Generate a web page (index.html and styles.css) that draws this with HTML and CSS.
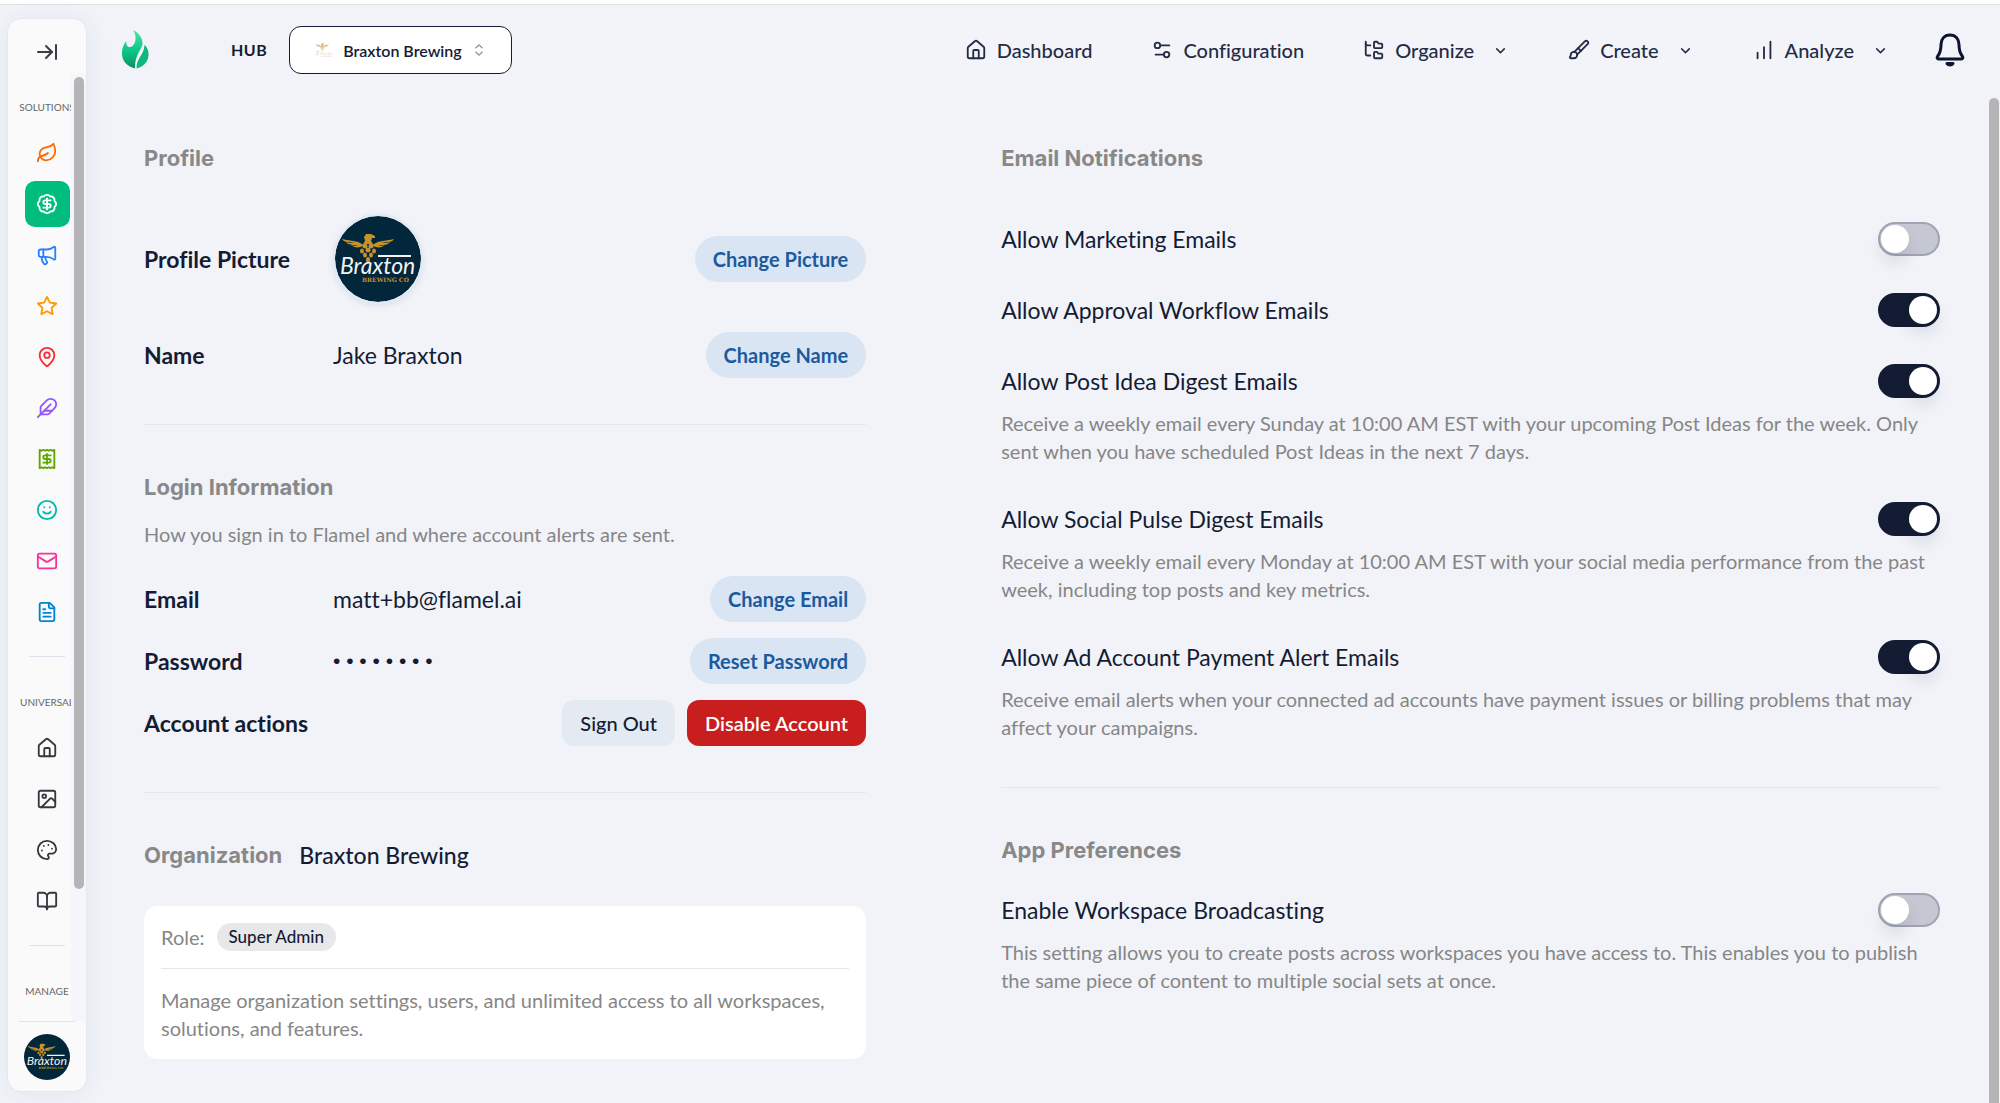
FILE: index.html
```html
<!DOCTYPE html>
<html lang="en">
<head>
  <meta charset="UTF-8">
  <meta name="viewport" content="width=device-width, initial-scale=1.0">
  <title>Flamel - Account Settings</title>
  <link rel="stylesheet" href="styles.css">
</head>
<body>
  <svg class="defs" aria-hidden="true">
    <symbol id="eagle" viewBox="0 0 54 30">
      <g fill="#c8922b">
        <path d="M24 8l-1-4 2-3h5l4 2v2h-3l-1 3 2 3h-10z"/>
        <path d="M22 12C19 8 10 8 1 6c1 2 3 3 6 3l7 1c-4 0-7 0-9-1 2 3 6 3 9 3h3c-3 1-5 1-7 0 3 3 8 3 12 1z"/>
        <path d="M32 12c3-4 12-4 21-6-1 2-3 3-6 3l-7 1c4 0 7 0 9-1-2 3-6 3-9 3h-3c3 1 5 1 7 0-3 3-8 3-12 1z"/>
        <ellipse cx="24" cy="13" rx="2.500" ry="2.500"/>
        <ellipse cx="30" cy="13" rx="2.500" ry="2.500"/>
        <ellipse cx="21" cy="18" rx="2" ry="2.500"/>
        <ellipse cx="27" cy="17" rx="2.500" ry="2.500"/>
        <ellipse cx="33" cy="18" rx="2" ry="2.500"/>
        <ellipse cx="24" cy="22" rx="2" ry="2.500"/>
        <ellipse cx="30" cy="22" rx="2" ry="2.500"/>
        <ellipse cx="27" cy="27" rx="2" ry="3"/>
      </g>
    </symbol>
    <symbol id="brand" viewBox="0 0 86 86">
      <circle cx="43" cy="43" r="43" fill="#02263a"/>
      <use href="#eagle" x="6" y="17" width="54" height="30"/>
      <path d="M43 40h33" stroke="#f2f2f2" stroke-width="2"/>
      <text class="brand-script" x="5" y="58">Braxton</text>
      <text class="brand-sub" x="27" y="66">BREWING CO</text>
    </symbol>
    <symbol id="house" viewBox="0 0 24 24">
      <path d="M15 21v-8a1 1 0 0 0-1-1h-4a1 1 0 0 0-1 1v8"/>
      <path d="M3 10a2 2 0 0 1 .709-1.528l7-6a2 2 0 0 1 2.582 0l7 6A2 2 0 0 1 21 10v9a2 2 0 0 1-2 2H5a2 2 0 0 1-2-2z"/>
    </symbol>
    <symbol id="chevron" viewBox="0 0 24 24"><path d="m6 9 6 6 6-6"/></symbol>
  </svg>

  <div class="app">
    <aside class="sidebar">
      <button class="side-toggle" aria-label="Expand sidebar">
        <svg class="icon" viewBox="0 0 24 24"><path d="M17 12H3"/><path d="m11 18 6-6-6-6"/><path d="M21 5v14"/></svg>
      </button>
      <div class="side-scroll">
        <nav class="side-nav">
          <div class="side-label">SOLUTIONS</div>
          <a href="#" class="side-item orange" aria-label="Organic"><svg class="icon" viewBox="0 0 24 24"><path d="M11 20A7 7 0 0 1 9.800 6.100C15.500 5 17 4.480 19 2c1 2 2 4.180 2 8 0 5.500-4.780 10-10 10Z"/><path d="M2 21c0-3 1.850-5.360 5.080-6C9.500 14.520 12 13 13 12"/></svg></a>
          <a href="#" class="side-item active" aria-label="Hub"><svg class="icon" viewBox="0 0 24 24"><path d="M3.850 8.620a4 4 0 0 1 4.780-4.770 4 4 0 0 1 6.740 0 4 4 0 0 1 4.780 4.780 4 4 0 0 1 0 6.740 4 4 0 0 1-4.770 4.780 4 4 0 0 1-6.750 0 4 4 0 0 1-4.780-4.770 4 4 0 0 1 0-6.760Z"/><path d="M16 8h-6a2 2 0 1 0 0 4h4a2 2 0 1 1 0 4H8"/><path d="M12 18V6"/></svg></a>
          <a href="#" class="side-item blue" aria-label="Ads"><svg class="icon" viewBox="0 0 24 24"><path d="M11 6a13 13 0 0 0 8.400-2.800A1 1 0 0 1 21 4v12a1 1 0 0 1-1.600.8A13 13 0 0 0 11 14H5a2 2 0 0 1-2-2V8a2 2 0 0 1 2-2z"/><path d="M6 14a12 12 0 0 0 2.400 7.200 2 2 0 0 0 3.200-2.400A8 8 0 0 1 10 14"/><path d="M8 6v8"/></svg></a>
          <a href="#" class="side-item amber" aria-label="Reviews"><svg class="icon" viewBox="0 0 24 24"><path d="M12 2l3.090 6.260L22 9.270l-5 4.870 1.180 6.880L12 17.770l-6.180 3.250L7 14.140 2 9.270l6.910-1.010z"/></svg></a>
          <a href="#" class="side-item red" aria-label="Locations"><svg class="icon" viewBox="0 0 24 24"><path d="M20 10c0 4.993-5.539 10.193-7.399 11.799a1 1 0 0 1-1.202 0C9.539 20.193 4 14.993 4 10a8 8 0 0 1 16 0"/><circle cx="12" cy="10" r="3"/></svg></a>
          <a href="#" class="side-item purple" aria-label="Writing"><svg class="icon" viewBox="0 0 24 24"><path d="M12.670 19a2 2 0 0 0 1.416-.588l6.154-6.172a6 6 0 0 0-8.490-8.490L5.586 9.914A2 2 0 0 0 5 11.328V18a1 1 0 0 0 1 1z"/><path d="M16 8 2 22"/><path d="M17.500 15H9"/></svg></a>
          <a href="#" class="side-item green" aria-label="Billing"><svg class="icon" viewBox="0 0 24 24"><path d="M4 2v20l2-1 2 1 2-1 2 1 2-1 2 1 2-1 2 1V2l-2 1-2-1-2 1-2-1-2 1-2-1-2 1Z"/><path d="M16 8h-6a2 2 0 1 0 0 4h4a2 2 0 1 1 0 4H8"/><path d="M12 17.500v-11"/></svg></a>
          <a href="#" class="side-item teal" aria-label="Engagement"><svg class="icon" viewBox="0 0 24 24"><circle cx="12" cy="12" r="10"/><path d="M8 14s1.500 2 4 2 4-2 4-2"/><path d="M9 9h.01"/><path d="M15 9h.01"/></svg></a>
          <a href="#" class="side-item pink" aria-label="Email"><svg class="icon" viewBox="0 0 24 24"><rect x="2" y="4" width="20" height="16" rx="2"/><path d="m22 7-8.970 5.700a1.940 1.940 0 0 1-2.060 0L2 7"/></svg></a>
          <a href="#" class="side-item sky" aria-label="Pages"><svg class="icon" viewBox="0 0 24 24"><path d="M15 2H6a2 2 0 0 0-2 2v16a2 2 0 0 0 2 2h12a2 2 0 0 0 2-2V7Z"/><path d="M14 2v4a2 2 0 0 0 2 2h4"/><path d="M10 9H8"/><path d="M16 13H8"/><path d="M16 17H8"/></svg></a>
          <hr class="side-divider">
          <div class="side-label">UNIVERSAL</div>
          <a href="#" class="side-item" aria-label="Home"><svg class="icon"><use href="#house"/></svg></a>
          <a href="#" class="side-item" aria-label="Media"><svg class="icon" viewBox="0 0 24 24"><rect x="3" y="3" width="18" height="18" rx="2"/><circle cx="9" cy="9" r="2"/><path d="m21 15-3.086-3.086a2 2 0 0 0-2.828 0L6 21"/></svg></a>
          <a href="#" class="side-item" aria-label="Branding"><svg class="icon" viewBox="0 0 24 24"><path d="M12 22a1 1 0 0 1 0-20 10 9 0 0 1 10 9 5 5 0 0 1-5 5h-2.250a1.750 1.750 0 0 0-1.400 2.800l.3.400a1.750 1.750 0 0 1-1.400 2.800z"/><path d="M13.500 6.500h.01"/><path d="M17.500 10.500h.01"/><path d="M6.500 12.500h.01"/><path d="M8.500 7.500h.01"/></svg></a>
          <a href="#" class="side-item" aria-label="Library"><svg class="icon" viewBox="0 0 24 24"><path d="M12 7v14"/><path d="M3 18a1 1 0 0 1-1-1V4a1 1 0 0 1 1-1h5a4 4 0 0 1 4 4 4 4 0 0 1 4-4h5a1 1 0 0 1 1 1v13a1 1 0 0 1-1 1h-6a3 3 0 0 0-3 3 3 3 0 0 0-3-3z"/></svg></a>
          <hr class="side-divider">
          <div class="side-label">MANAGE</div>
        </nav>
        <div class="side-track"><div class="side-thumb"></div></div>
      </div>
      <div class="side-footer">
        <svg class="side-avatar" role="img" aria-label="Account"><use href="#brand"/></svg>
      </div>
    </aside>

    <main class="main">
      <header class="topbar">
        <svg class="logo" viewBox="0 0 28 40" role="img" aria-label="Flamel">
          <defs>
            <linearGradient id="flame" x1="0" y1="0" x2="0" y2="1">
              <stop offset="0" stop-color="#4fe3a5"/>
              <stop offset=".55" stop-color="#0bc587"/>
              <stop offset="1" stop-color="#089160"/>
            </linearGradient>
          </defs>
          <path fill="url(#flame)" d="M12 0c5 2 10 8 9.500 14-.5 5-8 11-7.500 24.500C6 36.500 1 31 1 23.500 1 18 3 13 5.500 11c-.8 4 1 6.500 4 6 3.500-.6 5.500-6 5-10.500C14.200 4 13.200 1.500 12 0z"/>
          <path fill="#0db77e" d="M23.500 15c2.500 2 4.500 6 4 10.500-.6 7-5.500 11.500-12 13 0-11 7.500-13 8-23.500z"/>
        </svg>
        <span class="hub">HUB</span>
        <div class="workspace">
          <svg class="workspace-logo" viewBox="0 0 54 42" aria-hidden="true">
            <use href="#eagle" x="0" y="0" width="44" height="24"/>
            <path d="M4 36l4-13M4 25c8-3 12 2 2 5 9 0 6 6-4 6M16 36l2-6 4-1M26 30c-6 0-5 6 0 5l1-5M31 30l6 6M38 29l-8 8M42 26l-2 9h3M48 30c-4 0-4 6 0 5s3-6 0-5M18 40h34" fill="none" stroke="#d9d0bc" stroke-width="2"/>
          </svg>
          <select class="workspace-select" aria-label="Workspace">
            <option>Braxton Brewing</option>
          </select>
          <svg class="workspace-arrows" viewBox="0 0 24 24" aria-hidden="true"><path d="m6 15 6 6 6-6"/><path d="m6 9 6-6 6 6"/></svg>
        </div>

        <nav class="topnav">
          <a href="#" class="nav-item"><svg class="icon"><use href="#house"/></svg>Dashboard</a>
          <a href="#" class="nav-item"><svg class="icon" viewBox="0 0 24 24"><path d="M20 7h-9"/><path d="M14 17H5"/><circle cx="17" cy="17" r="3"/><circle cx="7" cy="7" r="3"/></svg>Configuration</a>
          <button class="nav-item"><svg class="icon" viewBox="0 0 24 24"><path d="M20 10a1 1 0 0 0 1-1V6a1 1 0 0 0-1-1h-2.500a1 1 0 0 1-.8-.4l-.9-1.200A1 1 0 0 0 15 3h-2a1 1 0 0 0-1 1v5a1 1 0 0 0 1 1Z"/><path d="M20 21a1 1 0 0 0 1-1v-3a1 1 0 0 0-1-1h-2.900a1 1 0 0 1-.88-.55l-.42-.85a1 1 0 0 0-.92-.6H13a1 1 0 0 0-1 1v5a1 1 0 0 0 1 1Z"/><path d="M3 5a2 2 0 0 0 2 2h3"/><path d="M3 3v13a2 2 0 0 0 2 2h3"/></svg>Organize<svg class="caret"><use href="#chevron"/></svg></button>
          <button class="nav-item"><svg class="icon" viewBox="0 0 24 24"><path d="m11 10 3 3"/><path d="M6.500 21A3.500 3.500 0 1 0 3 17.500a2.620 2.620 0 0 1-.708 1.792A1 1 0 0 0 3 21z"/><path d="M9.969 17.031 21.378 5.624a1 1 0 0 0-3.002-3.002L6.967 14.031"/></svg>Create<svg class="caret"><use href="#chevron"/></svg></button>
          <button class="nav-item"><svg class="icon" viewBox="0 0 24 24"><path d="M5 21v-6"/><path d="M12 21V9"/><path d="M19 21V3"/></svg>Analyze<svg class="caret"><use href="#chevron"/></svg></button>
        </nav>
        <button class="bell" aria-label="Notifications">
          <svg class="bell-icon" viewBox="0 0 30 34"><path d="M15 2c-6 0-9 4.500-9 9.500 0 6-1.500 9.500-3.500 12-.8 1.200-.2 2.500 1 2.500h23c1.200 0 1.800-1.300 1-2.500-2-2.500-3.500-6-3.500-12C24 6.500 21 2 15 2z"/><path d="M12 30.500c1.500 2 4.500 2 6 0z"/></svg>
        </button>
      </header>

      <div class="page">
        <div class="content">
          <div class="column">
            <section class="section">
              <h2>Profile</h2>
              <div class="row picture-row">
                <span class="row-label">Profile Picture</span>
                <svg class="avatar" role="img" aria-label="Profile picture"><use href="#brand"/></svg>
                <button class="btn btn-soft">Change Picture</button>
              </div>
              <div class="row name-row">
                <span class="row-label">Name</span>
                <span>Jake Braxton</span>
                <button class="btn btn-soft">Change Name</button>
              </div>
            </section>

            <section class="section">
              <h2>Login Information</h2>
              <p class="muted login-hint">How you sign in to Flamel and where account alerts are sent.</p>
              <div class="login-rows">
                <div class="row">
                  <span class="row-label">Email</span>
                  <span>matt+bb@flamel.ai</span>
                  <button class="btn btn-soft">Change Email</button>
                </div>
                <div class="row">
                  <span class="row-label">Password</span>
                  <span class="dots">• • • • • • • •</span>
                  <button class="btn btn-soft">Reset Password</button>
                </div>
                <div class="row">
                  <span class="row-label">Account actions</span>
                  <div class="actions">
                    <button class="btn btn-plain">Sign Out</button>
                    <button class="btn btn-danger">Disable Account</button>
                  </div>
                </div>
              </div>
            </section>

            <section class="section">
              <div class="org-title">
                <h2>Organization</h2>
                <span class="org-name">Braxton Brewing</span>
              </div>
              <div class="card">
                <div class="role muted">Role: <span class="badge">Super Admin</span></div>
                <p class="muted card-text">Manage organization settings, users, and unlimited access to all workspaces, solutions, and features.</p>
              </div>
            </section>
          </div>

          <div class="column">
            <section class="section">
              <h2>Email Notifications</h2>
              <div class="settings">
                <div class="setting">
                  <label for="marketing">Allow Marketing Emails</label>
                  <input type="checkbox" class="switch" id="marketing">
                </div>
                <div class="setting">
                  <label for="approval">Allow Approval Workflow Emails</label>
                  <input type="checkbox" class="switch" id="approval" checked>
                </div>
                <div class="setting">
                  <label for="idea">Allow Post Idea Digest Emails</label>
                  <input type="checkbox" class="switch" id="idea" checked>
                  <p class="muted">Receive a weekly email every Sunday at 10:00 AM EST with your upcoming Post Ideas for the week. Only sent when you have scheduled Post Ideas in the next 7 days.</p>
                </div>
                <div class="setting">
                  <label for="pulse">Allow Social Pulse Digest Emails</label>
                  <input type="checkbox" class="switch" id="pulse" checked>
                  <p class="muted">Receive a weekly email every Monday at 10:00 AM EST with your social media performance from the past week, including top posts and key metrics.</p>
                </div>
                <div class="setting">
                  <label for="payment">Allow Ad Account Payment Alert Emails</label>
                  <input type="checkbox" class="switch" id="payment" checked>
                  <p class="muted">Receive email alerts when your connected ad accounts have payment issues or billing problems that may affect your campaigns.</p>
                </div>
              </div>
            </section>

            <section class="section">
              <h2>App Preferences</h2>
              <div class="settings prefs">
                <div class="setting">
                  <label for="broadcast">Enable Workspace Broadcasting</label>
                  <input type="checkbox" class="switch" id="broadcast">
                  <p class="muted">This setting allows you to create posts across workspaces you have access to. This enables you to publish the same piece of content to multiple social sets at once.</p>
                </div>
              </div>
            </section>
          </div>
        </div>
        <div class="page-thumb"></div>
      </div>
    </main>
  </div>
</body>
</html>
```
FILE: styles.css
```css
* { box-sizing: border-box; }
body { margin: 0; font-family: Lato, "Liberation Sans", sans-serif; font-size: 23px; line-height: 28px; font-variant-ligatures: none; color: #141c33; background: #f1f3f9; }
h2, p { margin: 0; }
h2 { font-family: Inter, "Liberation Sans", sans-serif; font-size: 22px; font-weight: 700; line-height: 28px; color: #888; }
a { color: inherit; text-decoration: none; }
button { font-family: inherit; color: inherit; border: none; background: none; cursor: pointer; }
.defs { position: absolute; width: 0; height: 0; }
.icon { width: 24px; height: 24px; flex: none; fill: none; stroke: currentColor; stroke-width: 2; stroke-linecap: round; stroke-linejoin: round; }
.muted { color: #868686; font-size: 20px; line-height: 28px; }
.brand-script { font-family: Lato, sans-serif; font-size: 23px; font-style: italic; font-weight: 400; fill: #f2f2f2; }
.brand-sub { font-family: "DejaVu Serif", serif; font-size: 6px; font-weight: 700; fill: #c8922b; }

.app { display: flex; height: 100vh; border-top: 4px solid #fff; box-shadow: inset 0 1px #dfe0e4; }

/* sidebar */
.sidebar { display: flex; flex-direction: column; width: 80px; margin: 14px 0 11px 7px; background: #fafafa; border: 1px solid #e6e8ef; border-radius: 14px; box-shadow: 0 2px 24px rgba(40, 50, 90, 0.07); overflow: hidden; flex: none; }
.side-toggle { display: flex; justify-content: center; align-items: center; height: 44px; margin: 11px 0 0; padding: 0; color: #3c3c44; flex: none; }
.side-scroll { position: relative; flex: 1; min-height: 0; }
.side-nav { display: flex; flex-direction: column; align-items: center; height: 100%; overflow: hidden; gap: 5px; color: #36363e; }
.side-label { margin: 23px 0 8px; font-size: 10px; line-height: 20px; color: #666; }
.side-item { display: flex; justify-content: center; align-items: center; width: 45px; height: 46px; border-radius: 10px; flex: none; }
.side-item .icon { width: 22px; height: 22px; }
.side-divider { width: 36px; margin: 16px 0 7px; border: none; border-top: 1px solid #dfe2ea; flex: none; }
.orange { color: #ff6a00; }
.active { color: #fff; background: #00bd7d; }
.blue { color: #2b7fff; }
.amber { color: #fe9a00; }
.red { color: #fb2c36; }
.purple { color: #9255ff; }
.green { color: #5ea500; }
.teal { color: #00bba7; }
.pink { color: #f6339a; }
.sky { color: #0084d1; }
.side-track { position: absolute; top: 0; right: 0; bottom: 0; width: 15px; padding: 3px 2px 0 3px; background: #f4f6fb; }
.side-thumb { height: 86%; border-radius: 5px; background: #b5b5b7; }
.side-footer { display: flex; justify-content: center; align-items: center; height: 70px; margin: 0 11px; border-top: 1px solid #e2e5ea; flex: none; }
.side-avatar { width: 46px; height: 46px; }

/* top bar */
.main { display: flex; flex-direction: column; flex: 1; min-width: 0; }
.topbar { display: flex; align-items: center; height: 92px; padding: 0 35px 0 34px; flex: none; }
.logo { width: 28px; height: 40px; }
.hub { margin: 0 22px 0 82px; font-size: 16px; font-weight: 700; letter-spacing: 0.03em; }
.workspace { display: flex; align-items: center; gap: 10px; height: 48px; padding: 0 25px; background: #fff; border: 1px solid #141c33; border-radius: 12px; }
.workspace-logo { width: 18px; height: 14px; opacity: 0.7; }
.workspace-select { appearance: none; padding: 0; border: none; background: none; font-family: inherit; font-size: 16px; font-weight: 600; color: inherit; }
.workspace-arrows { width: 14px; height: 14px; fill: none; stroke: #8b909e; stroke-width: 2; }
.topnav { display: flex; gap: 15px; margin-left: auto; }
.nav-item { display: flex; align-items: center; gap: 10px; height: 46px; padding: 0 22px; border-radius: 12px; font-size: 20px; line-height: 28px; font-weight: 500; color: #232c45; background: #f3f4f9; }
.nav-item .icon { width: 22px; height: 22px; }
.caret { width: 17px; height: 17px; margin-left: 8px; fill: none; stroke: currentColor; stroke-width: 2; }
.bell { margin-left: 24px; padding: 0; height: 34px; }
.bell-icon { width: 30px; height: 34px; fill: none; stroke: #0b1530; stroke-width: 3; stroke-linejoin: round; }

/* settings page */
.page { display: flex; flex: 1; min-height: 0; }
.content { display: grid; grid-template-columns: 10fr 13fr; gap: 135px; align-items: start; flex: 1; padding: 0 49px 0 57px; }
.page-thumb { width: 10px; margin: 2px 1px 0 0; border-radius: 5px 5px 0 0; background: #b5b5b7; }
.section { padding: 48px 0 46px; }
.section + .section { border-top: 1px solid #e4e7ee; }
.row { display: grid; grid-template-columns: 189px 1fr auto; align-items: center; min-height: 46px; }
.row-label { font-weight: 700; white-space: nowrap; }
.picture-row { min-height: 90px; margin-top: 42px; }
.name-row { margin-top: 28px; }
.avatar { width: 90px; height: 90px; border: 2px solid #e1e9f3; border-radius: 50%; box-shadow: 0 2px 6px rgba(30, 60, 110, 0.1); }
.login-hint { margin-top: 19px; }
.login-rows { display: flex; flex-direction: column; gap: 16px; margin-top: 28px; }
.dots { font-family: "Liberation Sans", sans-serif; font-size: 21px; }
.actions { display: flex; gap: 12px; grid-column: 2 / 4; justify-content: flex-end; }
.btn { height: 46px; padding: 0 18px; font-size: 20px; font-weight: 700; white-space: nowrap; }
.btn-soft { color: #1c5a9e; background: #d9e5f3; border-radius: 23px; }
.btn-plain { font-weight: 500; background: #e3eaf2; border-radius: 12px; }
.btn-danger { font-weight: 600; color: #fff; background: #c81e1e; border-radius: 12px; }
.org-title { display: flex; align-items: center; gap: 17px; }
.org-name { font-weight: 500; }
.card { margin-top: 37px; padding: 17px; background: #fff; border-radius: 14px; }
.role { display: flex; align-items: center; gap: 12px; padding-bottom: 17px; border-bottom: 1px solid #e2e8f0; }
.badge { padding: 0 12px; border-radius: 14px; font-size: 17px; font-weight: 500; color: #141c33; background: #e8e8eb; }
.card-text { margin-top: 17px; }
.settings { display: flex; flex-direction: column; gap: 37px; margin-top: 50px; }
.prefs { margin-top: 29px; }
.setting { display: grid; grid-template-columns: 1fr auto; align-items: center; row-gap: 11px; }
.setting .muted { grid-column: 1 / 3; }
.switch { appearance: none; width: 62px; height: 34px; margin: 0; padding: 1px; border: 2px solid #a0a5b5; border-radius: 17px; background: #c5c8d3; cursor: pointer; }
.switch::before { content: ""; display: block; width: 28px; height: 28px; border-radius: 50%; background: #fff; box-shadow: 0 10px 15px rgba(20, 28, 51, 0.1); }
.switch:checked { background: #141c33; border-color: #141c33; }
.switch:checked::before { margin-left: auto; }
```
